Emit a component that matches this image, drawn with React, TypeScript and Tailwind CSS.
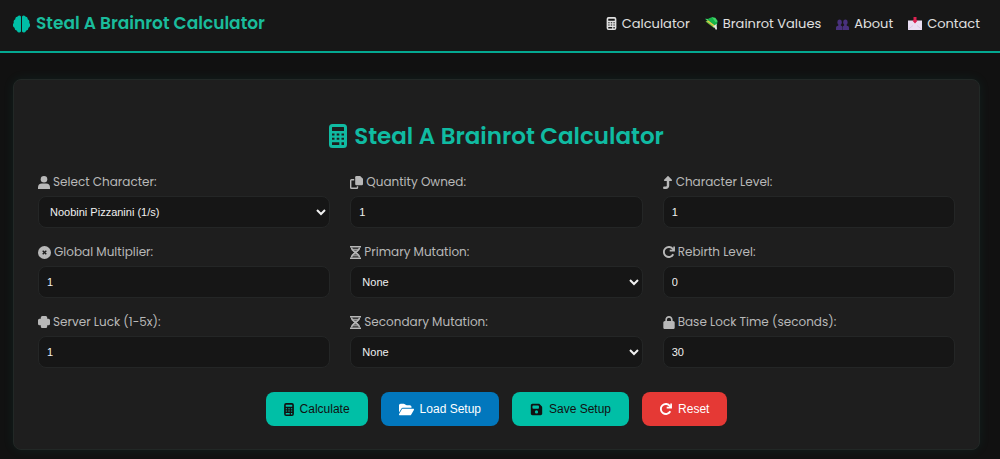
import { ComponentProps, FC, ReactNode } from "react";
import { IconType } from "react-icons";
import { FaFloppyDisk, FaFolderOpen, FaLock, FaTurnUp } from "react-icons/fa6";

type IconProps = { className?: string };

const CalculatorIcon: FC<IconProps> = ({ className }) => (
  <svg className={className} viewBox="0 0 18 24" fill="currentColor" fillRule="evenodd" aria-hidden="true">
    <path d="M3.5 0h11A3.5 3.5 0 0 1 18 3.5v17a3.5 3.5 0 0 1-3.500 3.500h-11A3.500 3.500 0 0 1 0 20.500v-17A3.500 3.500 0 0 1 3.500 0ZM3.500 3a.5.5 0 0 0-.5.5V7h12V3.500a.5.5 0 0 0-.5-.5ZM3 9.500v2h2.500v-2ZM7.700 9.500v2h2.600v-2ZM12.500 9.500v2H15v-2ZM3 13.700v2h2.500v-2ZM7.700 13.700v2h2.600v-2ZM12.500 13.700v2H15v-2ZM3 18.300V21h7.300v-2.700ZM12.500 18.300V21H15v-2.700Z" />
  </svg>
);

const BrainIcon: FC<IconProps> = ({ className }) => (
  <svg className={className} viewBox="0 0 17 18" fill="currentColor" aria-hidden="true">
    <path d="M8 1.500v15A2.200 2.200 0 0 1 4 15.800 3 3 0 0 1 1.500 12.800 3 3 0 0 1 .8 8 3.200 3.200 0 0 1 2.300 4.200 2.500 2.500 0 0 1 4.600 1.500 2.200 2.200 0 0 1 8 1.500Z" />
    <path d="M9 1.500v15a2.200 2.200 0 0 0 4-.7 3 3 0 0 0 2.500-3 3 3 0 0 0 .7-4.800 3.200 3.200 0 0 0-1.500-3.800 2.500 2.500 0 0 0-2.300-2.700A2.200 2.200 0 0 0 9 1.500Z" />
  </svg>
);

const UserIcon: FC<IconProps> = ({ className }) => (
  <svg className={className} viewBox="0 0 12 13" fill="currentColor" aria-hidden="true">
    <circle cx="6" cy="3.300" r="3.300" />
    <path d="M0 13v-1.500a4 4 0 0 1 4-4h4a4 4 0 0 1 4 4V13Z" />
  </svg>
);

const CopyIcon: FC<IconProps> = ({ className }) => (
  <svg className={className} viewBox="0 0 13 13" aria-hidden="true">
    <path d="M6.500 0h3.700L13 2.800V8a1.300 1.300 0 0 1-1.300 1.300H6.500A1.300 1.300 0 0 1 5.200 8V1.300A1.300 1.300 0 0 1 6.500 0Z" fill="currentColor" />
    <path d="M4.200 3.700H1.500a.8.8 0 0 0-.8.8v7a.8.8 0 0 0 .8.8h5.200a.8.8 0 0 0 .8-.8v-1.200" fill="none" stroke="currentColor" strokeWidth="1.400" />
  </svg>
);

const HourglassIcon: FC<IconProps> = ({ className }) => (
  <svg className={className} viewBox="0 0 11 13" fill="none" stroke="currentColor" aria-hidden="true">
    <path d="M0 .8h11M0 12.200h11" strokeWidth="1.600" />
    <path d="M1.500 1.500c0 3 2.500 3.500 4 5 1.500 1.500 4 2 4 5M9.500 1.500c0 3-2.500 3.500-4 5-1.500 1.500-4 2-4 5" strokeWidth="1.600" />
    <path d="M2 3.300h7M3.300 5h4.400M3.300 8h4.400M2 9.800h7" />
  </svg>
);

const CloverIcon: FC<IconProps> = ({ className }) => (
  <svg className={className} viewBox="0 0 12 12" fill="currentColor" aria-hidden="true">
    <path d="M4.300 0h3.400A1.500 1.500 0 0 1 9.200 1.500v1.300h1.300A1.500 1.500 0 0 1 12 4.300v3.400a1.500 1.500 0 0 1-1.500 1.500H9.200v1.300A1.500 1.500 0 0 1 7.700 12H4.300a1.500 1.500 0 0 1-1.500-1.500V9.200H1.500A1.500 1.500 0 0 1 0 7.700V4.300a1.500 1.500 0 0 1 1.500-1.500h1.300V1.500A1.500 1.500 0 0 1 4.300 0Z" />
  </svg>
);

const RotateIcon: FC<IconProps> = ({ className }) => (
  <svg className={className} viewBox="0 0 12 12" fill="none" stroke="currentColor" strokeWidth="1.900" aria-hidden="true">
    <path d="M10.300 8.300A5 5 0 1 1 10 3.200l.8 1" />
    <path d="M11.100.4v4.300H6.700" strokeWidth="1.700" />
  </svg>
);

const MultiplierIcon: FC<IconProps> = ({ className }) => (
  <svg className={className} viewBox="0 0 13 13" aria-hidden="true">
    <circle cx="6.500" cy="6.500" r="6.500" fill="currentColor" />
    <path d="m4.700 4.700 3.600 3.600M8.300 4.700 4.700 8.300" stroke="#1e1e1e" strokeWidth="1.400" />
  </svg>
);

const MoneyIcon: FC<IconProps> = ({ className }) => (
  <svg className={className} viewBox="0 0 13 13" aria-hidden="true">
    <path d="M3.500 1.500 7.500 0l5 4.500-.5 3.500-3 1L2.500 5Z" fill="#16b34a" />
    <path d="m0 1.800 3.500.2L2.500 4ZM7 .3l3.300.5 2.500 3.500-2.300 1Z" fill="#3fd467" />
    <path d="m.5 4.500 2.500-1L10.500 9 9 11Z" fill="#6cc644" />
    <path d="m2.500 3.800 7.500 5.700" stroke="#f1c84b" strokeWidth="1.200" />
    <path d="m8 9.800 3.500-3 .5 5.200-1 1-1.500-2.500Z" fill="#e5e7e3" />
  </svg>
);

const PeopleIcon: FC<IconProps> = ({ className }) => (
  <svg className={className} viewBox="0 0 13 11" fill="#49317d" aria-hidden="true">
    <ellipse cx="3.600" cy="3.300" rx="2.200" ry="2.800" />
    <ellipse cx="9.400" cy="3.300" rx="2.200" ry="2.800" />
    <path d="M0 11V8.500A2 2 0 0 1 2 6.700l.8-1h1.600l.8 1a1.500 1.500 0 0 1 1.100 1V11ZM6.700 11V7.700a1.500 1.500 0 0 1 1.100-1l.8-1h1.600l.8 1a2 2 0 0 1 2 1.800V11Z" />
  </svg>
);

const MailIcon: FC<IconProps> = ({ className }) => (
  <svg className={className} viewBox="0 0 14 13" aria-hidden="true">
    <path d="M0 3.500h14V13H0Z" fill="#eadff3" />
    <path d="m0 12.500 5-4M14 12.500l-5-4" stroke="#d2c1df" strokeWidth=".7" />
    <path d="M5.500 0h3v3.500h1.200L7 6.500 4.300 3.500h1.200Z" fill="#dc2150" />
  </svg>
);

const navLinks: { label: string; icon: ReactNode }[] = [
  { label: "Calculator", icon: <CalculatorIcon className="h-[13px] w-[11px] text-[#e0e0e0]" /> },
  { label: "Brainrot Values", icon: <MoneyIcon className="size-[13px]" /> },
  { label: "About", icon: <PeopleIcon className="mt-[2px] h-[11px] w-[13px]" /> },
  { label: "Contact", icon: <MailIcon className="h-[13px] w-[14px]" /> },
];

type Field = {
  id: string;
  label: string;
  icon: FC<IconProps> | IconType;
  iconClass: string;
  value: string;
  select?: boolean;
};

const fields: Field[] = [
  { id: "character", label: "Select Character:", icon: UserIcon, iconClass: "h-[13px] w-[12px]", value: "Noobini Pizzanini (1/s)", select: true },
  { id: "quantity", label: "Quantity Owned:", icon: CopyIcon, iconClass: "size-[13px]", value: "1" },
  { id: "level", label: "Character Level:", icon: FaTurnUp, iconClass: "h-[13px] w-[10px]", value: "1" },
  { id: "multiplier", label: "Global Multiplier:", icon: MultiplierIcon, iconClass: "size-[13px]", value: "1" },
  { id: "primary", label: "Primary Mutation:", icon: HourglassIcon, iconClass: "h-[13px] w-[11px]", value: "None", select: true },
  { id: "rebirth", label: "Rebirth Level:", icon: RotateIcon, iconClass: "size-[12px]", value: "0" },
  { id: "luck", label: "Server Luck (1-5x):", icon: CloverIcon, iconClass: "size-[12px]", value: "1" },
  { id: "secondary", label: "Secondary Mutation:", icon: HourglassIcon, iconClass: "h-[13px] w-[11px]", value: "None", select: true },
  { id: "lock", label: "Base Lock Time (seconds):", icon: FaLock, iconClass: "h-[13px] w-[12px]", value: "30" },
];

const controlClass =
  "h-8 w-full rounded-lg border border-[#242626] bg-[#161616] font-['Liberation_Sans',sans-serif] text-[11px] text-[#f0f0f0]";

const FormField: FC<Field> = ({ id, label, icon: Icon, iconClass, value, select }) => (
  <div>
    <label htmlFor={id} className="mb-1 flex h-5 items-center gap-[3px] text-[12px] text-[#b8b8b8]">
      <Icon className={iconClass} />
      {label}
    </label>
    {select ? (
      <select id={id} className={`${controlClass} px-[7px]`}>
        <option>{value}</option>
      </select>
    ) : (
      <input id={id} type="number" defaultValue={value} className={`${controlClass} px-2`} />
    )}
  </div>
);

const ActionButton: FC<ComponentProps<"button">> = ({ className, children }) => (
  <button
    type="button"
    className={`flex h-[34px] items-center gap-[6px] rounded-lg px-[18px] font-['Liberation_Sans',sans-serif] text-[12px] ${className}`}
  >
    {children}
  </button>
);

const App = () => (
  <div className="min-h-screen bg-[#111111] pb-[9px] font-[Poppins,sans-serif]">
    <header className="flex h-[53px] items-center justify-between border-b-2 border-[#04a891] bg-[#171717] pr-5 pb-1 pl-[13px]">
      <a href="#" className="flex items-center gap-[6px] text-[17px] font-semibold text-[#1abc9c]">
        <BrainIcon className="h-[18px] w-[17px] text-[#00bfa6]" />
        Steal A Brainrot Calculator
      </a>
      <nav className="flex items-center gap-[15px]">
        {navLinks.map(({ label, icon }) => (
          <a key={label} href="#" className="flex items-center gap-[5px] text-[13px] text-[#e0e0e0]">
            {icon}
            {label}
          </a>
        ))}
      </nav>
    </header>
    <main className="mt-[26px] mr-5 ml-[13px] rounded-lg border border-[#222826] bg-[#1e1e1e] px-6 pt-[38px] pb-[23px] shadow-[0_0_12px_#00bfa614]">
      <h1 className="mb-[18px] flex h-9 items-center justify-center gap-[7px] text-[23px] font-semibold text-[#10bba2]">
        <CalculatorIcon className="h-6 w-[18px]" />
        Steal A Brainrot Calculator
      </h1>
      <form>
        <div className="grid grid-cols-3 gap-x-5 gap-y-[14px]">
          {fields.map(field => <FormField key={field.id} {...field} />)}
        </div>
        <div className="mt-6 flex justify-center gap-[13px]">
          <ActionButton className="bg-[#00bfa6] text-[#111111]">
            <CalculatorIcon className="h-[13px] w-[10px]" />
            Calculate
          </ActionButton>
          <ActionButton className="bg-[#0277bd] text-white">
            <FaFolderOpen className="size-[15px]" />
            Load Setup
          </ActionButton>
          <ActionButton className="bg-[#00bfa6] text-[#111111]">
            <FaFloppyDisk className="size-[13px]" />
            Save Setup
          </ActionButton>
          <ActionButton className="bg-[#e53935] text-white">
            <RotateIcon className="size-[12px]" />
            Reset
          </ActionButton>
        </div>
      </form>
    </main>
  </div>
);

export default App;
